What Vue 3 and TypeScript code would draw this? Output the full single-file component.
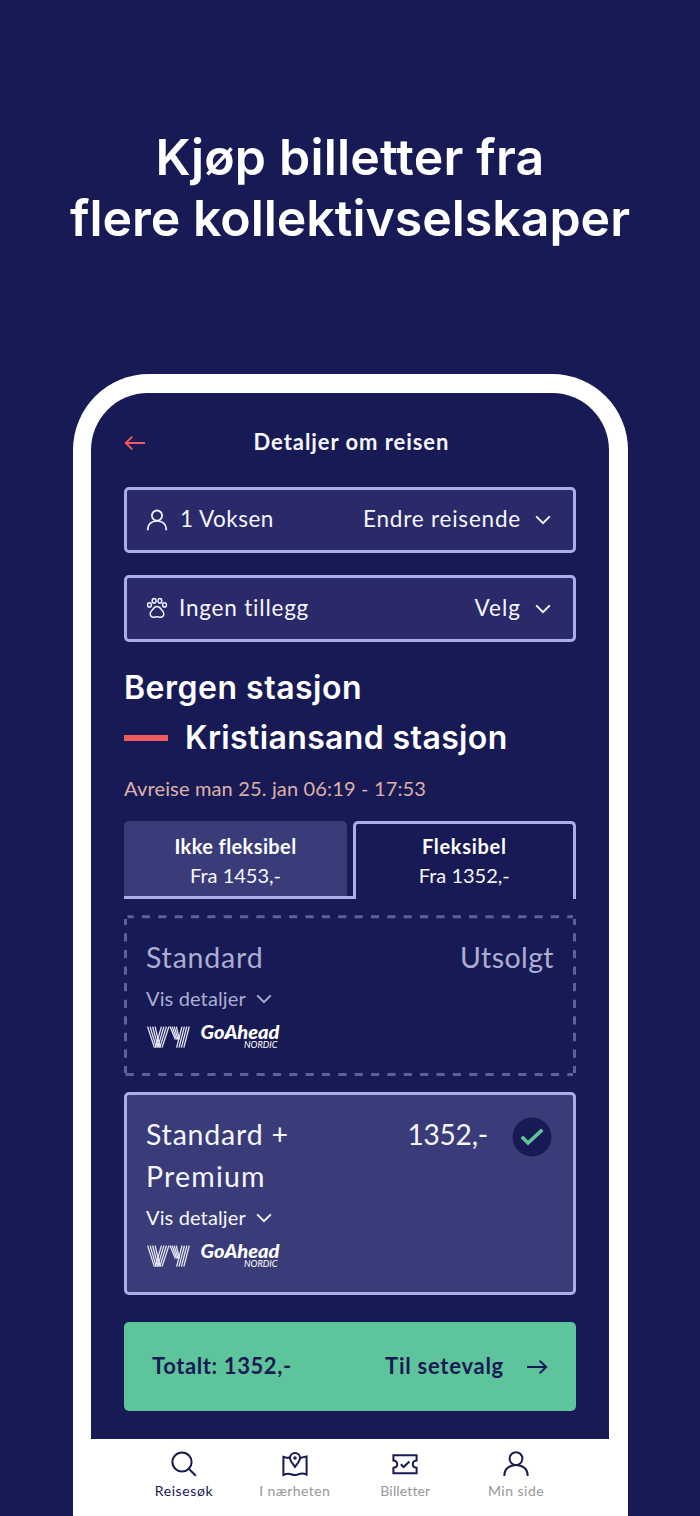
<script setup lang="ts">
interface NavItem {
  id: 'search' | 'map' | 'ticket' | 'person'
  label: string
  active?: boolean
}

interface Fare {
  title: string[]
  price: string
  soldOut: boolean
}

const navItems: NavItem[] = [
  { id: 'search', label: 'Reisesøk', active: true },
  { id: 'map', label: 'I nærheten' },
  { id: 'ticket', label: 'Billetter' },
  { id: 'person', label: 'Min side' },
]

const fares: Fare[] = [
  { title: ['Standard'], price: 'Utsolgt', soldOut: true },
  { title: ['Standard +', 'Premium'], price: '1352,-', soldOut: false },
]

// Parallel strokes that make up each arm of the Vy mark
const strands = [0, 1, 2, 3]
</script>

<template>
  <main class="page">
    <h1 class="headline">
      <span class="h-line one">Kjøp billetter fra</span>
      <span class="h-line two">flere kollektivselskaper</span>
    </h1>

    <section class="phone">
      <div class="screen">
        <header class="topbar">
          <svg class="back" viewBox="0 0 22 16" width="22" height="16">
            <path d="M21 8H2M8.2 1.6 1.8 8l6.4 6.4" />
          </svg>
          <span class="title">Detaljer om reisen</span>
        </header>

        <div class="select">
          <svg class="lead" viewBox="0 0 22 22" width="22" height="22">
            <circle cx="11" cy="6.6" r="5.1" />
            <path d="M1.8 21.2v-1.400c0-4.500 3.800-8 9.200-8s9.200 3.500 9.200 8v1.400" />
          </svg>
          <span class="t-voksen">1 Voksen</span>
          <span class="push t-endre">Endre reisende</span>
          <svg class="chev" viewBox="0 0 16 10" width="16" height="10"><path d="M1.2 1.4 8 8.2l6.8-6.8" /></svg>
        </div>

        <div class="select">
          <svg class="lead paw" viewBox="0 0 22 22" width="22" height="22">
            <ellipse cx="8.1" cy="3.8" rx="1.9" ry="2.4" />
            <ellipse cx="13.9" cy="3.8" rx="1.9" ry="2.4" />
            <ellipse cx="3.5" cy="7.9" rx="1.9" ry="2.1" />
            <ellipse cx="18.5" cy="7.9" rx="1.9" ry="2.1" />
            <path d="M11 9.4c-2.200 0-3.300 1.300-4.200 2.900-.8 1.400-2.600 2.200-2.600 4.500 0 2 1.500 3.400 3.500 3.400 1.300 0 2-.4 3.300-.4s2 .4 3.300.4c2 0 3.500-1.400 3.500-3.400 0-2.300-1.800-3.100-2.600-4.500-.9-1.600-2-2.900-4.200-2.900z" />
          </svg>
          <span class="t-ingen">Ingen tillegg</span>
          <span class="push t-velg">Velg</span>
          <svg class="chev" viewBox="0 0 16 10" width="16" height="10"><path d="M1.2 1.4 8 8.2l6.8-6.8" /></svg>
        </div>

        <div class="route">
          <div class="station from">Bergen stasjon</div>
          <div class="station to"><i class="dash"></i>Kristiansand stasjon</div>
        </div>
        <p class="departure">Avreise man 25. jan 06:19 - 17:53</p>

        <div class="tabs">
          <div class="tab-left">
            <div class="tab-fill">
              <b class="t-ikke">Ikke fleksibel</b>
              <span>Fra 1453,-</span>
            </div>
          </div>
          <div class="tab-right">
            <b class="t-fleks">Fleksibel</b>
            <span>Fra 1352,-</span>
          </div>
        </div>

        <article
          v-for="fare in fares"
          :key="fare.price"
          class="fare"
          :class="fare.soldOut ? 'sold-out' : 'selected'"
        >
          <svg v-if="fare.soldOut" class="outline" viewBox="0 0 452 161" width="452" height="161">
            <path d="M3.5 1.7H449" stroke-dasharray="6.2 8.160 8.200 8.160 8.200 8.160 8.200 8.160 8.200 8.160 8.200 8.160 8.200 8.160 8.200 8.160 8.200 8.160 8.200 8.160 8.200 8.160 8.200 8.160 8.200 8.160 8.200 8.160 8.200 8.160 8.200 8.160 8.200 8.160 8.200 8.160 8.200 8.160 8.200 8.160 8.200 8.160 8.200 8.160 8.200 8.160 8.200 8.160 8.200 8.160 8.200 8.160 8.200 8.160 6.200 20" />
            <path d="M1.6 159.4H449" stroke-dasharray="8.2 8.16" />
            <path d="M1.5 4v6M1.5 18.3V158" stroke-dasharray="8.3 8.29" />
            <path d="M450.500 4v6M450.500 18.300V158" stroke-dasharray="8.3 8.29" />
          </svg>
          <div class="fare-head">
            <div class="fare-title">
              <span v-for="(line, i) in fare.title" :key="line" :class="{ wide: i === 1 }">{{ line }}</span>
            </div>
            <span class="fare-price">{{ fare.price }}</span>
            <svg v-if="!fare.soldOut" class="check" viewBox="0 0 40 40" width="40" height="40">
              <circle cx="20" cy="20" r="19.4" />
              <path d="m9.800 19.700 6.200 6.400L30.300 12.700" />
            </svg>
          </div>
          <div class="details">
            <span>Vis detaljer</span>
            <svg class="chev" viewBox="0 0 16 10" width="16" height="10"><path d="M1.2 1.4 8 8.2l6.8-6.8" /></svg>
          </div>
          <svg class="logos" viewBox="0 -8 140 36" width="140" height="36">
            <g class="vy">
              <path v-for="i in strands" :key="'v' + i" :d="`M${1.6 + i * 2.5} 1.6 L${8.4 + i * 1.9} 22.6`" />
              <path v-for="i in strands" :key="'w' + i" :d="`M${15.4 + i * 2.5} 1.6 L${9.4 + i * 2.2} 22.6`" />
              <path v-for="i in strands" :key="'y' + i" :d="`M${24 + i * 2.1} 1.6 L${29.4 + i * 1.3} 14.5`" />
              <path v-for="i in strands" :key="'z' + i" :d="`M${36 + i * 2.4} 1.6 L${30.6 + i * 2.4} 22.6`" />
            </g>
            <text class="goahead" x="54.5" y="14" textLength="79" lengthAdjust="spacingAndGlyphs">GoAhead</text>
            <path class="tail" d="M78.5 13.200c2.200 0 3.300-.8 4.600-2.800" />
            <text class="nordic" x="98" y="22.5" textLength="33.500" lengthAdjust="spacingAndGlyphs">NORDIC</text>
          </svg>
        </article>

        <div class="cta">
          <span class="t-total">Totalt: 1352,-</span>
          <span class="push t-seat">Til setevalg</span>
          <svg class="next" viewBox="0 0 22 16" width="22" height="16">
            <path d="M1 8h19M13.6 1.6 20.200 8l-6.600 6.400" />
          </svg>
        </div>
      </div>

      <nav class="nav">
        <div v-for="item in navItems" :key="item.id" class="nav-item" :class="{ active: item.active }">
          <svg viewBox="0 0 26 26" width="26" height="26">
            <template v-if="item.id === 'search'">
              <circle cx="11" cy="11" r="9.6" />
              <path d="m17.8 17.8 7 7" />
            </template>
            <template v-else-if="item.id === 'map'">
              <path d="M8 6.200 5.400 7 1.400 5.800V24c2.800-1.400 5-1.800 7.600-.8 3.200 1.300 5 1.300 8 0 2.600-1.100 4.800-.8 7.600.4V5.400L18 7" />
              <path d="M13 15.800C10.600 12.600 8 9.900 8 7a5 5 0 0 1 10 0c0 2.900-2.600 5.600-5 8.800z" />
              <circle cx="13" cy="7" r=".8" class="dot" />
            </template>
            <template v-else-if="item.id === 'ticket'">
              <path d="M1.4 4.2h23.200v5.400c-2.400.3-3.800 1.700-3.800 3.600s1.400 3.300 3.800 3.600v5.400H1.400v-5.400c2.400-.3 3.800-1.700 3.800-3.600s-1.400-3.300-3.800-3.600z" />
              <path d="m8.800 13.200 2.800 2.800 5.800-5.400" />
            </template>
            <template v-else>
              <circle cx="13" cy="7.600" r="6.400" />
              <path d="M1.4 25v-1.400c0-5.400 5-9.600 11.600-9.600s11.600 4.200 11.600 9.600V25" />
            </template>
          </svg>
          <span :class="'label-' + item.id">{{ item.label }}</span>
        </div>
      </nav>
    </section>
  </main>
</template>

<style>
html,
body {
  background: #171a54;
}
</style>

<style scoped>
* {
  box-sizing: border-box;
}
.page {
  width: 700px;
  height: 1516px;
  overflow: hidden;
  background: #171a54;
  color: #f6f6ff;
  font-family: Lato, "Open Sans", sans-serif;
}
svg {
  display: block;
  flex: none;
  fill: none;
  stroke-width: 2;
}
.headline {
  margin: 0;
  height: 374px;
  padding-top: 127px;
  font: 600 50px/61px Inter, Lato, sans-serif;
  color: #fff;
  text-align: center;
}
.h-line {
  display: block;
  white-space: nowrap;
}
.one {
  letter-spacing: 0.2px;
}
.two {
  letter-spacing: -0.02px;
}
.phone {
  width: 555px;
  height: 1160px;
  margin: 0 auto;
  padding: 18.5px 18.5px 0;
  border-radius: 76px 76px 0 0;
  background: #fff;
}
.screen {
  height: 1046px;
  padding: 34px 33px 0;
  border-radius: 57px 57px 0 0;
  background: #171a54;
}
.topbar {
  display: flex;
  align-items: center;
  justify-content: center;
  height: 30px;
  margin-bottom: 30px;
}
.back {
  margin-top: 2px;
  margin-right: auto;
  stroke: #f0595f;
}
.title {
  margin-right: auto;
  padding-right: 19px;
  font-size: 22px;
  font-weight: 700;
  line-height: 30px;
  letter-spacing: 0.94px;
}
.select {
  display: flex;
  align-items: center;
  height: 66.5px;
  margin-bottom: 22px;
  padding: 0 22px 2px 19px;
  border: 3px solid #a9aee9;
  border-radius: 5px;
  background: #2a2a6b;
  font-size: 22.5px;
}
.lead {
  margin-right: 12px;
  margin-top: 2px;
  stroke: #f0f0ff;
  stroke-width: 1.8;
}
.paw {
  margin-right: 11px;
  stroke-width: 1.5;
}
.push {
  margin-left: auto;
}
.select .chev {
  margin-left: 14px;
  margin-top: 3px;
}
.chev {
  stroke: currentColor;
}
.t-voksen {
  letter-spacing: 0.5px;
}
.t-endre {
  letter-spacing: 0.8px;
}
.t-ingen {
  letter-spacing: 0.8px;
}
.t-velg {
  letter-spacing: 1px;
}
.route {
  margin-top: -1px;
}
.station {
  display: flex;
  align-items: center;
  height: 50px;
  font: 600 32px/50px Inter, Lato, sans-serif;
  color: #fff;
}
.from {
  letter-spacing: 0.5px;
}
.to {
  letter-spacing: 0.38px;
}
.dash {
  width: 44px;
  height: 6px;
  margin-right: 17px;
  background: #f0595f;
}
.departure {
  margin: 12px 0 20.5px;
  font-size: 20px;
  line-height: 26px;
  letter-spacing: 0.16px;
  color: #dfb1a8;
}
.tabs {
  display: flex;
  height: 78px;
  margin-bottom: 15.5px;
  font-size: 20px;
  line-height: 29px;
  text-align: center;
}
.tabs b,
.tabs span {
  display: block;
}
.tabs b {
  font-weight: 700;
  color: #fff;
}
.tab-left {
  width: 228.5px;
  border-bottom: 3px solid #a9aee9;
}
.tab-fill {
  width: 223px;
  height: 100%;
  padding-top: 11px;
  border-radius: 5px 5px 0 0;
  background: #3a3c79;
}
.tab-right {
  width: 223.5px;
  padding-top: 8px;
  border: 3px solid #a9aee9;
  border-bottom: 0;
  border-radius: 5px 5px 0 0;
}
.t-ikke {
  letter-spacing: 0.4px;
}
.t-fleks {
  letter-spacing: 0.7px;
}
.fare {
  position: relative;
  padding: 21px 22px 0;
}
.sold-out {
  height: 161px;
  margin-bottom: 16.5px;
  color: #adaed2;
}
.selected {
  height: 202.5px;
  margin-bottom: 27.5px;
  padding: 18px 19px 0;
  border: 3px solid #a9aee9;
  border-radius: 5px;
  background: #3a3c79;
}
.outline {
  position: absolute;
  inset: 0;
  stroke: #5d609b;
  stroke-width: 3;
}
.fare-head {
  display: flex;
  font-size: 28.5px;
  line-height: 42px;
  letter-spacing: 0.8px;
}
.fare-title {
  margin-right: auto;
}
.fare-title span {
  display: block;
}
.fare-title .wide {
  letter-spacing: 1.2px;
}
.sold-out .fare-price {
  letter-spacing: 0.4px;
}
.selected .fare-price {
  font-size: 28px;
  letter-spacing: -0.2px;
}
.check {
  margin: 3.5px 2px 0 24px;
  fill: #171a54;
}
.check path {
  fill: none;
  stroke: #5ec49c;
  stroke-width: 3.6;
}
.details {
  display: flex;
  align-items: center;
  margin: 7.5px 0 6px;
  font-size: 20px;
  line-height: 26px;
  letter-spacing: 0.13px;
}
.selected .details {
  margin-top: 7px;
}
.details .chev {
  margin: 2px 0 0 10px;
}
.vy {
  stroke: #e8e8f6;
  stroke-width: 1.3;
}
.goahead {
  font: italic 900 18.5px Lato, sans-serif;
  fill: #fff;
}
.tail {
  stroke: #fff;
  stroke-width: 1.8;
}
.nordic {
  font: italic 400 9px Lato, sans-serif;
  fill: #fff;
}
.cta {
  display: flex;
  align-items: center;
  height: 88.5px;
  padding: 0 28px 1px 28px;
  border-radius: 5px;
  background: #5ec49c;
  color: #171a54;
  font-size: 22px;
  font-weight: 700;
}
.t-total {
  letter-spacing: 0.6px;
}
.t-seat {
  letter-spacing: 0.75px;
}
.next {
  margin-left: 22px;
  margin-top: 2px;
  stroke: #171a54;
}
.nav {
  display: flex;
  justify-content: center;
  padding-top: 12px;
}
.nav-item {
  display: flex;
  flex-direction: column;
  align-items: center;
  width: 110.7px;
  font-size: 14px;
  line-height: 18px;
  color: #97979c;
}
.nav-item svg {
  margin-bottom: 5px;
  stroke: #171a54;
}
.nav-item .dot {
  fill: #171a54;
}
.active {
  color: #171a54;
}
.label-search {
  letter-spacing: 0.6px;
}
.label-map {
  letter-spacing: 0.4px;
}
.label-ticket {
  letter-spacing: 0.15px;
}
.label-person {
  letter-spacing: 0.5px;
}
</style>
